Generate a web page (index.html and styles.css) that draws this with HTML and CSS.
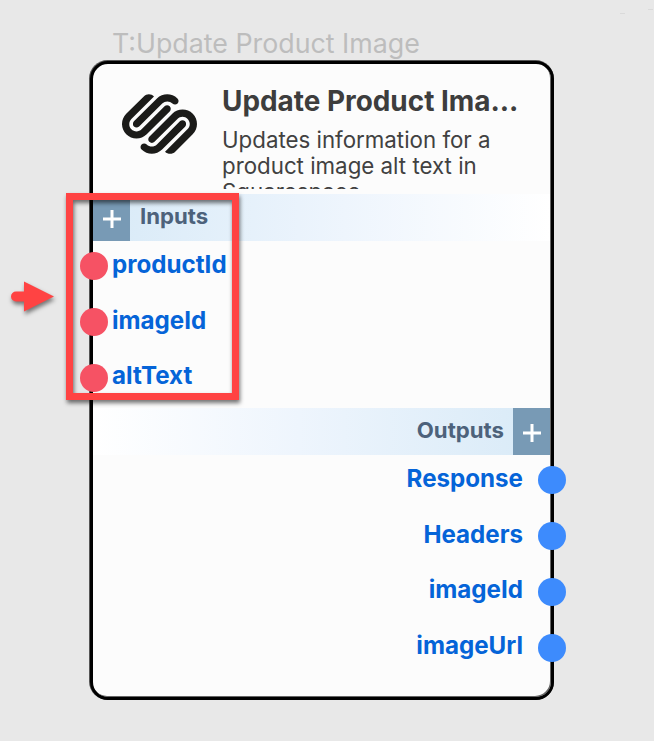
FILE: index.html
```html
<!DOCTYPE html>
<html lang="en">
<head>
<meta charset="utf-8">
<title>Update Product Image</title>
<link rel="stylesheet" href="styles.css">
</head>
<body>
<main class="canvas">
  <div class="caption">T:Update Product Image</div>
  <section class="node">
    <header class="head">
      <svg class="logo" viewBox="0 2.4 24 19.2" preserveAspectRatio="none" fill="#1b1b19"><path d="M22.655 8.719c-1.802-1.801-4.726-1.801-6.564 0l-7.351 7.35c-.45.45-.45 1.2 0 1.65.45.449 1.2.449 1.65 0l7.351-7.351c.899-.899 2.362-.899 3.264 0 .9.9.9 2.364 0 3.264l-7.239 7.239c.9.899 2.362.899 3.263 0l5.589-5.589c1.836-1.838 1.836-4.763.037-6.563zm-2.475 2.437c-.451-.45-1.201-.45-1.65 0l-7.354 7.389c-.9.899-2.361.899-3.262 0-.45-.45-1.2-.45-1.65 0s-.45 1.2 0 1.649c1.801 1.801 4.726 1.801 6.564 0l7.351-7.35c.449-.487.449-1.239.001-1.688zm-2.439-7.35c-1.801-1.801-4.726-1.801-6.564 0l-7.351 7.351c-.45.449-.45 1.199 0 1.649s1.2.45 1.65 0l7.395-7.351c.9-.899 2.371-.899 3.27 0 .451.45 1.201.45 1.65 0 .421-.487.421-1.199-.05-1.649zm-2.475 2.494c-.45-.45-1.2-.45-1.65 0l-7.351 7.389c-.899.9-2.363.9-3.265 0-.9-.899-.9-2.363 0-3.264l7.239-7.239c-.9-.899-2.362-.899-3.263 0L1.35 8.752c-1.801 1.8-1.801 4.763 0 6.564 1.8 1.8 4.763 1.8 6.563 0l7.351-7.35c.451-.487.451-1.216.002-1.666z"/></svg>
      <div class="info">
        <h1 class="title">Update Product Ima...</h1>
        <p class="desc">Updates information for a product image alt text in Squarespace.</p>
      </div>
    </header>
    <div class="band band-in">
      <span class="add"><svg viewBox="0 0 18 18"><path d="M9 0v18M0 9h18"/></svg></span>
      <span class="band-label">Inputs</span>
    </div>
    <ul class="ports ports-in">
      <li><i class="dot"></i><span>productId</span></li>
      <li><i class="dot"></i><span>imageId</span></li>
      <li><i class="dot"></i><span>altText</span></li>
    </ul>
    <div class="band band-out">
      <span class="band-label">Outputs</span>
      <span class="add"><svg viewBox="0 0 18 18"><path d="M9 0v18M0 9h18"/></svg></span>
    </div>
    <ul class="ports ports-out">
      <li><span>Response</span><i class="dot"></i></li>
      <li><span>Headers</span><i class="dot"></i></li>
      <li><span>imageId</span><i class="dot"></i></li>
      <li><span>imageUrl</span><i class="dot"></i></li>
    </ul>
  </section>
  <div class="highlight"></div>
  <svg class="arrow" viewBox="0 0 44 32"><path d="M5 10.500H13V.5L43 15.500 13 30.500V20.500H5a5 5 0 0 1 0-10z" fill="#ff4343"/></svg>
  <i class="speck speck-a"></i>
  <i class="speck speck-b"></i>
</main>
</body>
</html>
```

FILE: styles.css
```css
* { box-sizing: border-box; }
body { margin: 0; background: #e8e8e8; font-family: Inter, sans-serif; }
.canvas { position: relative; width: 654px; height: 741px; overflow: hidden; padding: 27px 0 0 90px; }
.caption { height: 34px; padding-left: 22px; font-size: 26.8px; line-height: 33px; color: #bdbdbd; white-space: nowrap; }
.node { width: 464px; height: 639px; padding-right: 1px; border: 3px solid #000; border-radius: 18px; background: #fcfcfc; box-shadow: -.5px -.5px 0 .5px #555, inset -1px -1px 0 #666; }
.head { display: flex; height: 130px; padding: 21px 20px 0 29px; }
.logo { flex: none; width: 75px; height: 60px; margin-top: 9px; }
.info { width: 310px; flex: none; margin-left: 25px; }
.title { margin: 0; font-size: 27.9px; line-height: 33px; font-weight: 700; color: #3d3d3d; white-space: nowrap; }
.desc { margin: 9px 0 0; height: 62px; overflow: hidden; width: 280px; font-size: 22.3px; line-height: 26.2px; color: #414141; }
.band { display: flex; height: 47px; }
.band-in { background: linear-gradient(90deg, #d8eaf7, #eef5fd 55%, #fff); }
.band-out { justify-content: flex-end; background: linear-gradient(90deg, #fff, #eef5fd 45%, #d8eaf7); }
.add { display: flex; width: 37px; padding: 16px 0 0 10px; background: #789ab5; }
.add svg { width: 18px; height: 18px; stroke: #fff; stroke-width: 3; }
.band-label { font-size: 22.2px; line-height: 44px; font-weight: 700; color: #4d627b; }
.band-in .band-label { margin-left: 10px; }
.band-out .band-label { margin-right: 9px; }
.ports { list-style: none; margin: 0; padding: 0; color: #0564d8; font-size: 24.15px; font-weight: 700; }
.ports li { display: flex; align-items: center; height: 55.8px; position: relative; top: -2.700px; }
.ports span { position: relative; top: -2px; }
.ports-in { height: 167px; }
.ports-in li { margin-left: -13px; gap: 4px; }
.ports-out li { justify-content: flex-end; margin-right: -15.500px; gap: 14.500px; }
.dot { flex: none; width: 28px; height: 28px; border-radius: 50%; background: #f65264; }
.ports-out .dot { background: #3d8bfd; }
.highlight { position: absolute; left: 66px; top: 193px; width: 173px; height: 207px; border: 7px solid #ff4343; filter: drop-shadow(1px 3px 2px rgba(0,0,0,.55)); }
.arrow { position: absolute; left: 11px; top: 280.5px; width: 44px; height: 32px; overflow: visible; filter: drop-shadow(1px 3px 2px rgba(0,0,0,.5)); }
.speck { position: absolute; width: 5px; height: 1px; background: #dadada; }
.speck-a { left: 620px; top: 13px; }
.speck-b { left: 648px; top: 9px; }
```
